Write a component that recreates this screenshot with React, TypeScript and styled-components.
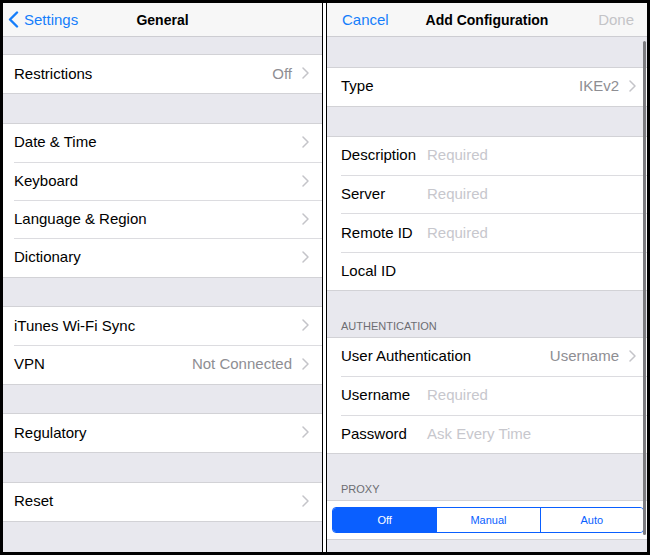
import React from 'react'
import styled, { createGlobalStyle } from 'styled-components'

const BLUE = '#157efb'
const SEG_BLUE = '#0a5fff'

const GlobalStyle = createGlobalStyle`
    html, body {
        margin: 0;
        padding: 0;
        background: #000;
    }
    body {
        font-family: "Liberation Sans", Arial, sans-serif;
        -webkit-font-smoothing: antialiased;
    }
`

interface SettingItem {
    label: string
    value?: string
}

const generalGroups: SettingItem[][] = [
    [{ label: 'Restrictions', value: 'Off' }],
    [{ label: 'Date & Time' }, { label: 'Keyboard' }, { label: 'Language & Region' }, { label: 'Dictionary' }],
    [{ label: 'iTunes Wi-Fi Sync' }, { label: 'VPN', value: 'Not Connected' }],
    [{ label: 'Regulatory' }],
    [{ label: 'Reset' }],
]

const Chevron = () => (
    <ChevronSvg width="7" height="12" viewBox="0 0 7 12">
        <path d="M1 1 L6 6 L1 11" fill="none" stroke="#c4c4c9" strokeWidth="1.5" strokeLinecap="round" strokeLinejoin="round" />
    </ChevronSvg>
)

const BackChevron = () => (
    <svg width="11" height="17" viewBox="0 0 11 17">
        <path d="M9 1.5 L2 8.5 L9 15.5" fill="none" stroke={BLUE} strokeWidth="2.4" strokeLinecap="round" strokeLinejoin="round" />
    </svg>
)

const GeneralScreen = () => (
    <Screen $width={319} $inset={11} $trail={13}>
        <NavBar>
            <BackButton>
                <BackChevron />
                <NavButton $pad={5}>Settings</NavButton>
            </BackButton>
            <NavTitle>General</NavTitle>
            <span />
        </NavBar>
        {generalGroups.map((group, gi) => (
            <Group key={gi} $gap={gi === 0 ? 18 : 30.6}>
                {group.map(item => (
                    <Cell key={item.label} $h={38.2}>
                        <CellBody>
                            <Label>{item.label}</Label>
                            <Value>{item.value}</Value>
                            <Chevron />
                        </CellBody>
                    </Cell>
                ))}
            </Group>
        ))}
    </Screen>
)

const FieldCell = ({ label, placeholder }: { label: string; placeholder?: string }) => (
    <Cell $h={38.4}>
        <CellBody>
            <FieldLabel>{label}</FieldLabel>
            <Placeholder>{placeholder}</Placeholder>
        </CellBody>
    </Cell>
)

const ConfigScreen = () => (
    <Screen $width={320} $inset={14} $trail={11}>
        <NavBar>
            <NavLeft>
                <NavButton $pad={2}>Cancel</NavButton>
            </NavLeft>
            <NavTitle>Add Configuration</NavTitle>
            <NavRight>
                <NavButton $pad={0} $disabled>Done</NavButton>
            </NavRight>
        </NavBar>
        <Group $gap={30.6}>
            <Cell $h={38.4}>
                <CellBody>
                    <Label>Type</Label>
                    <Value>IKEv2</Value>
                    <Chevron />
                </CellBody>
            </Cell>
        </Group>
        <Group $gap={30.6}>
            <FieldCell label="Description" placeholder="Required" />
            <FieldCell label="Server" placeholder="Required" />
            <FieldCell label="Remote ID" placeholder="Required" />
            <FieldCell label="Local ID" />
        </Group>
        <SectionHeader>AUTHENTICATION</SectionHeader>
        <Group $gap={0}>
            <Cell $h={38.4}>
                <CellBody>
                    <Label>User Authentication</Label>
                    <Value>Username</Value>
                    <Chevron />
                </CellBody>
            </Cell>
            <FieldCell label="Username" placeholder="Required" />
            <FieldCell label="Password" placeholder="Ask Every Time" />
        </Group>
        <SectionHeader>PROXY</SectionHeader>
        <Group $gap={0}>
            <SegmentRow>
                <Segmented>
                    {['Off', 'Manual', 'Auto'].map((s, i) => (
                        <Segment key={s} $active={i === 0}>{s}</Segment>
                    ))}
                </Segmented>
            </SegmentRow>
        </Group>
        <ScrollIndicator />
    </Screen>
)

export default function App() {
    return (
        <>
            <GlobalStyle />
            <Frame>
                <GeneralScreen />
                <Divider />
                <ConfigScreen />
            </Frame>
        </>
    )
}

const Frame = styled.div`
    display: flex;
    width: 650px;
    height: 555px;
    box-sizing: border-box;
    padding: 3px;
    background: #000;
`

const Screen = styled.div<{ $width: number; $inset: number; $trail: number }>`
    --inset: ${p => p.$inset}px;
    --trail: ${p => p.$trail}px;
    position: relative;
    display: flex;
    flex-direction: column;
    width: ${p => p.$width}px;
    flex-shrink: 0;
    background: #e8e8ee;
    overflow: hidden;
`

const Divider = styled.div`
    width: 3px;
    flex-shrink: 0;
    background: #fff;
    border-left: 1px solid #000;
    border-right: 1px solid #000;
`

const NavBar = styled.div`
    display: grid;
    grid-template-columns: 1fr auto 1fr;
    align-items: center;
    height: 34px;
    flex-shrink: 0;
    box-sizing: border-box;
    padding: 0 13px;
    background: #f7f7f7;
    border-bottom: 1px solid #cdcdd2;
`

const NavLeft = styled.div`
    display: flex;
    align-items: center;
`

const BackButton = styled(NavLeft)`
    margin-left: -8px;
`

const NavRight = styled.div`
    display: flex;
    justify-content: flex-end;
`

const NavButton = styled.span<{ $pad: number; $disabled?: boolean }>`
    padding-left: ${p => p.$pad}px;
    font-size: 15px;
    color: ${p => (p.$disabled ? '#c4c4c7' : BLUE)};
`

const NavTitle = styled.span`
    font-size: 14px;
    font-weight: bold;
    color: #000;
`

const Group = styled.div<{ $gap: number }>`
    margin-top: ${p => p.$gap}px;
    flex-shrink: 0;
    background: #fff;
    box-shadow: 0 -1px 0 #d2d2d6, 0 1px 0 #d2d2d6;
`

const CellBody = styled.div`
    display: flex;
    align-items: center;
    height: 100%;
    box-sizing: border-box;
    padding-right: var(--trail);
    padding-bottom: 2px;
`

const Cell = styled.div<{ $h: number }>`
    height: ${p => p.$h}px;
    box-sizing: border-box;
    padding-left: var(--inset);

    & + & > ${CellBody} {
        border-top: 1px solid #dcdce0;
    }
`

const Label = styled.span`
    flex: 1;
    font-size: 15px;
    color: #000;
    white-space: nowrap;
`

const Value = styled.span`
    margin-right: 10px;
    font-size: 15px;
    color: #8e8e93;
`

const ChevronSvg = styled.svg`
    flex-shrink: 0;
`

const FieldLabel = styled.span`
    width: 86px;
    flex-shrink: 0;
    font-size: 15px;
    color: #000;
    white-space: nowrap;
`

const Placeholder = styled.span`
    font-size: 15px;
    color: #c7c7cd;
`

const SectionHeader = styled.div`
    display: flex;
    align-items: flex-end;
    height: 47.6px;
    flex-shrink: 0;
    box-sizing: border-box;
    padding: 0 0 6px var(--inset);
    font-size: 11px;
    color: #6d6d72;
`

const SegmentRow = styled.div`
    display: flex;
    align-items: center;
    height: 38.4px;
    box-sizing: border-box;
    padding: 0 3px 0 5px;
`

const Segmented = styled.div`
    display: grid;
    grid-template-columns: repeat(3, 1fr);
    width: 100%;
    height: 26px;
    box-sizing: border-box;
    border: 1px solid ${SEG_BLUE};
    border-radius: 4px;
    overflow: hidden;
`

const Segment = styled.div<{ $active: boolean }>`
    display: flex;
    align-items: center;
    justify-content: center;
    font-size: 11px;
    color: ${p => (p.$active ? '#fff' : SEG_BLUE)};
    background: ${p => (p.$active ? SEG_BLUE : '#fff')};

    & + & {
        border-left: 1px solid ${SEG_BLUE};
    }
`

const ScrollIndicator = styled.div`
    position: absolute;
    top: 38px;
    right: 1.5px;
    width: 2.5px;
    height: 494px;
    border-radius: 2px;
    background: #7c7c80;
`
